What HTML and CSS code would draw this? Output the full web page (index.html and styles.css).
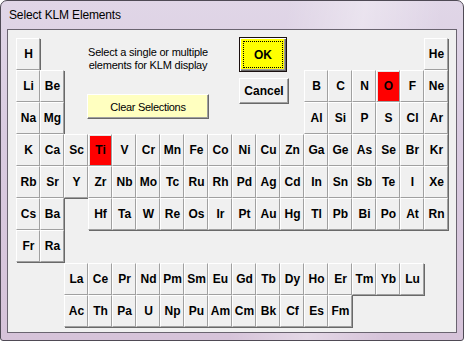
FILE: index.html
```html
<!DOCTYPE html>
<html>
<head>
<meta charset="utf-8">
<link rel="stylesheet" href="styles.css">
</head>
<body>
<div class="window">
  <div class="titlebar">Select KLM Elements</div>
  <div class="client">
    <div class="ptable">
      <div class="controls">
        <div class="leftcol">
          <div class="prompt">Select a single or multiple<br>elements for KLM display</div>
          <div class="btn clear">Clear Selections</div>
        </div>
        <div class="rightcol">
          <div class="btn ok">OK</div>
          <div class="btn cancel">Cancel</div>
        </div>
      </div>
      <div class="el">H</div><div class="el c18">He</div>
      <div class="el">Li</div><div class="el">Be</div>
      <div class="el c13">B</div><div class="el">C</div><div class="el">N</div><div class="el sel">O</div><div class="el">F</div><div class="el">Ne</div>
      <div class="el">Na</div><div class="el">Mg</div>
      <div class="el c13">Al</div><div class="el">Si</div><div class="el">P</div><div class="el">S</div><div class="el">Cl</div><div class="el">Ar</div>
      <div class="el">K</div><div class="el">Ca</div><div class="el">Sc</div><div class="el sel">Ti</div><div class="el">V</div><div class="el">Cr</div><div class="el">Mn</div><div class="el">Fe</div><div class="el">Co</div><div class="el">Ni</div><div class="el">Cu</div><div class="el">Zn</div><div class="el">Ga</div><div class="el">Ge</div><div class="el">As</div><div class="el">Se</div><div class="el">Br</div><div class="el">Kr</div>
      <div class="el">Rb</div><div class="el">Sr</div><div class="el">Y</div><div class="el">Zr</div><div class="el">Nb</div><div class="el">Mo</div><div class="el">Tc</div><div class="el">Ru</div><div class="el">Rh</div><div class="el">Pd</div><div class="el">Ag</div><div class="el">Cd</div><div class="el">In</div><div class="el">Sn</div><div class="el">Sb</div><div class="el">Te</div><div class="el">I</div><div class="el">Xe</div>
      <div class="el">Cs</div><div class="el">Ba</div>
      <div class="el c4">Hf</div><div class="el">Ta</div><div class="el">W</div><div class="el">Re</div><div class="el">Os</div><div class="el">Ir</div><div class="el">Pt</div><div class="el">Au</div><div class="el">Hg</div><div class="el">Tl</div><div class="el">Pb</div><div class="el">Bi</div><div class="el">Po</div><div class="el">At</div><div class="el">Rn</div>
      <div class="el">Fr</div><div class="el">Ra</div>
    </div>
    <div class="fblock">
      <div class="el">La</div><div class="el">Ce</div><div class="el">Pr</div><div class="el">Nd</div><div class="el">Pm</div><div class="el">Sm</div><div class="el">Eu</div><div class="el">Gd</div><div class="el">Tb</div><div class="el">Dy</div><div class="el">Ho</div><div class="el">Er</div><div class="el">Tm</div><div class="el">Yb</div><div class="el">Lu</div>
      <div class="el">Ac</div><div class="el">Th</div><div class="el">Pa</div><div class="el">U</div><div class="el">Np</div><div class="el">Pu</div><div class="el">Am</div><div class="el">Cm</div><div class="el">Bk</div><div class="el">Cf</div><div class="el">Es</div><div class="el">Fm</div>
    </div>
  </div>
</div>
</body>
</html>
```
FILE: styles.css
```css
* { box-sizing: border-box; }
html, body { margin: 0; padding: 0; background: #ffffff; }
body { width: 464px; height: 341px; overflow: hidden; font-family: "Liberation Sans", Arial, sans-serif; }

.window {
  width: 464px;
  height: 341px;
  border: 1px solid #4f4a55;
  border-radius: 7px 7px 3px 3px;
  padding: 0 6px 7px 6px;
  display: flex;
  flex-direction: column;
  background:
    linear-gradient(100deg, rgba(255,255,255,0) 55%, rgba(255,255,255,0.35) 70%, rgba(255,255,255,0) 85%),
    linear-gradient(to bottom, #e0d6e7 0%, #d9cbe0 40%, #d6c3d9 100%);
}

.titlebar {
  height: 28px;
  flex: none;
  padding-left: 2px;
  font-size: 12px;
  line-height: 29px;
  color: #000;
  letter-spacing: -0.15px;
}

.client {
  flex: 1;
  border: 1px solid #6a6470;
  background: #f0f0f0;
  padding: 8px 0 0 8px;
}

.ptable {
  display: grid;
  grid-template-columns: repeat(18, 24px);
  grid-auto-rows: 32px;
}

.fblock {
  display: grid;
  grid-template-columns: repeat(15, 24px);
  grid-auto-rows: 32px;
  margin: 1px 0 0 48px;
}

.el {
  width: 24px;
  height: 32px;
  background: #f0f0f0;
  border-top: 1px solid #ffffff;
  border-left: 1px solid #ffffff;
  border-right: 1px solid #a0a0a0;
  border-bottom: 1px solid #a0a0a0;
  box-shadow: 1px 1px 0 #696969;
  display: flex;
  align-items: center;
  justify-content: center;
  font-weight: bold;
  font-size: 12px;
  color: #000;
  padding-left: 1px;
}

.el.sel {
  background: #ff0000;
  box-shadow: 1px 1px 0 #696969, inset 1px 1px 0 #e3e3e3;
}

.c4 { grid-column-start: 4; }
.c13 { grid-column-start: 13; }
.c18 { grid-column-start: 18; }

.controls {
  grid-column: 3 / 13;
  grid-row: 1 / 4;
  align-self: start;
  margin-top: -1px;
  display: flex;
  align-items: flex-start;
}

.leftcol {
  width: 122px;
  margin-left: 23px;
  padding-top: 9px;
  display: flex;
  flex-direction: column;
}

.prompt {
  font-size: 11px;
  line-height: 13px;
  letter-spacing: -0.2px;
  text-align: center;
  color: #000;
}

.btn {
  display: flex;
  align-items: center;
  justify-content: center;
  color: #000;
  border-top: 1px solid #ffffff;
  border-left: 1px solid #ffffff;
  border-right: 1px solid #696969;
  border-bottom: 1px solid #696969;
  box-shadow: inset -1px -1px 0 #a0a0a0;
}

.clear {
  margin-top: 22px;
  width: 122px;
  height: 25px;
  background: #ffffc0;
  font-size: 11px;
  letter-spacing: -0.3px;
}

.rightcol {
  margin-left: 30px;
  display: flex;
  flex-direction: column;
}

.ok {
  width: 48px;
  height: 35px;
  background: #ffff00;
  border: 1px solid #1a1010;
  box-shadow: inset 1px 1px 0 #ffffff, inset -1px -1px 0 #696969, inset -2px -2px 0 #a0a0a0;
  outline: 1px dotted #000;
  outline-offset: -5px;
  font-weight: bold;
  font-size: 12px;
}

.cancel {
  margin-top: 6px;
  width: 50px;
  height: 26px;
  background: #f0f0f0;
  font-weight: bold;
  font-size: 12px;
}
```
